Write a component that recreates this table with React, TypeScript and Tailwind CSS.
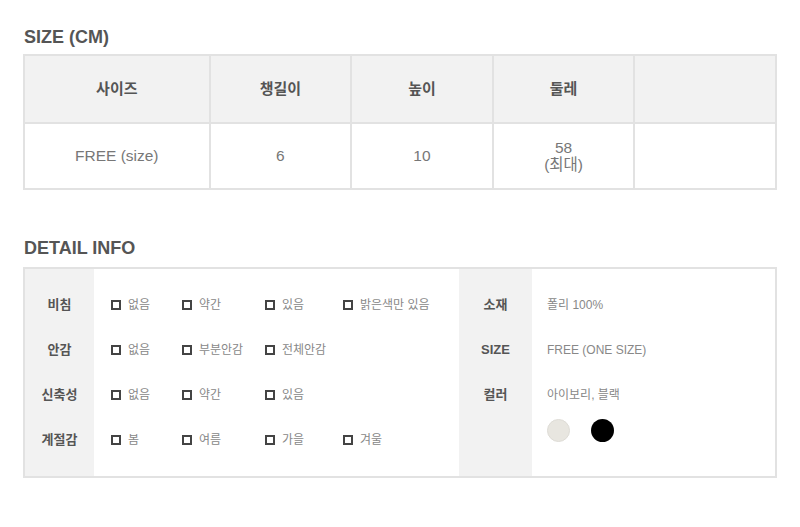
import React from "react";

const font = { fontFamily: '"Liberation Sans", "Noto Sans CJK KR", sans-serif' };

function Check({ label }: { label: string }) {
  return (
    <div className="flex items-center gap-[7px]">
      <span className="block w-[10px] h-[10px] border-2 border-[#444]" />
      <span className="text-[12px] text-[#888]">{label}</span>
    </div>
  );
}

const rows: { label: string; opts: string[] }[] = [
  { label: "비침", opts: ["없음", "약간", "있음", "밝은색만 있음"] },
  { label: "안감", opts: ["없음", "부분안감", "전체안감"] },
  { label: "신축성", opts: ["없음", "약간", "있음"] },
  { label: "계절감", opts: ["봄", "여름", "가을", "겨울"] },
];

export default function App() {
  return (
    <div className="w-[800px] h-[527px] bg-white pl-[23px] pt-[27px]" style={font}>
      <h2 className="text-[18px] font-bold text-[#555] leading-[20px] pl-[1px]">SIZE (CM)</h2>
      <table className="mt-[7px] border-collapse w-[754px] text-center">
        <thead>
          <tr className="bg-[#f2f2f2] h-[68px]">
            {["사이즈", "챙길이", "높이", "둘레", ""].map((h, i) => (
              <th
                key={i}
                className={`border-2 border-[#e2e2e2] text-[15px] font-bold text-[#555] ${
                  i === 0 ? "w-[186px]" : "w-[142px]"
                }`}
              >
                {h}
              </th>
            ))}
          </tr>
        </thead>
        <tbody>
          <tr className="h-[66px]">
            <td className="border-2 border-[#e2e2e2] text-[15.5px] text-[#777]">FREE (size)</td>
            <td className="border-2 border-[#e2e2e2] text-[15.5px] text-[#777]">6</td>
            <td className="border-2 border-[#e2e2e2] text-[15.5px] text-[#777]">10</td>
            <td className="border-2 border-[#e2e2e2] text-[15.5px] text-[#777] leading-[17px]">
              58
              <br />
              (최대)
            </td>
            <td className="border-2 border-[#e2e2e2]"></td>
          </tr>
        </tbody>
      </table>

      <h2 className="mt-[48px] text-[18px] font-bold text-[#555] leading-[20px] pl-[1px]">DETAIL INFO</h2>
      <div className="mt-[9px] w-[754px] h-[211px] border-2 border-[#e2e2e2] flex">
        <div className="w-[69px] bg-[#f2f2f2] pt-[13px] flex flex-col">
          {rows.map((r) => (
            <div key={r.label} className="h-[45px] flex items-center justify-center text-[13px] font-bold text-[#555]">
              {r.label}
            </div>
          ))}
        </div>
        <div className="w-[365px] pt-[13px] pl-[17px] flex flex-col">
          {rows.map((r) => (
            <div key={r.label} className="h-[45px] grid grid-cols-[71px_83px_78px_1fr] items-center">
              {r.opts.map((o) => (
                <Check key={o} label={o} />
              ))}
            </div>
          ))}
        </div>
        <div className="w-[73px] bg-[#f2f2f2] pt-[13px] flex flex-col">
          {["소재", "SIZE", "컬러"].map((l) => (
            <div key={l} className="h-[45px] flex items-center justify-center text-[13px] font-bold text-[#555]">
              {l}
            </div>
          ))}
        </div>
        <div className="flex-1 pt-[13px] pl-[15px] flex flex-col">
          <div className="h-[45px] flex items-center text-[12px] text-[#888]">폴리 100%</div>
          <div className="h-[45px] flex items-center text-[12px] text-[#888]">FREE (ONE SIZE)</div>
          <div className="h-[45px] flex items-center text-[12px] text-[#888]">아이보리, 블랙</div>
          <div className="flex gap-[21px] mt-[2px]">
            <span className="block w-[23px] h-[23px] rounded-full bg-[#e8e6e0] border border-[#dedcd6]" />
            <span className="block w-[23px] h-[23px] rounded-full bg-black" />
          </div>
        </div>
      </div>
    </div>
  );
}
